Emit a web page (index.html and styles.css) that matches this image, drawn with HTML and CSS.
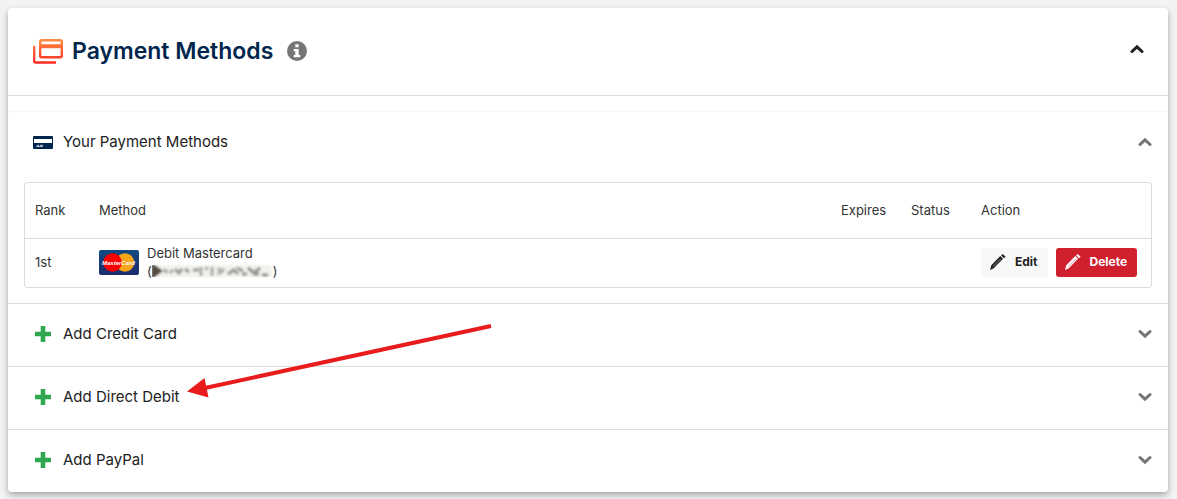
FILE: index.html
```html
<!DOCTYPE html>
<html lang="en">
<head>
  <meta charset="UTF-8">
  <meta name="viewport" content="width=device-width, initial-scale=1.0">
  <title>Payment Methods</title>
  <link rel="stylesheet" href="styles.css">
</head>
<body>

  <main class="card">
    <header class="card-header">
      <svg class="card-logo" width="30" height="26" viewBox="0 0 30 26" fill="none" aria-hidden="true">
        <defs>
          <linearGradient id="logoFill" gradientUnits="userSpaceOnUse" x1="0" y1="0" x2="0" y2="26">
            <stop offset="0" stop-color="#ff9440"/>
            <stop offset="1" stop-color="#fb2424"/>
          </linearGradient>
        </defs>
        <path d="M1.200 8v15.500q0 1 1 1H23" stroke="url(#logoFill)" stroke-width="2.300"/>
        <rect x="7.200" y="2.200" width="21.600" height="17" rx="1.500" stroke="url(#logoFill)" stroke-width="2.400"/>
        <path d="M7 8.200h22" stroke="url(#logoFill)" stroke-width="4"/>
      </svg>
      <h1 class="card-title">Payment Methods</h1>
      <button class="icon-button" type="button" aria-label="About payment methods">
        <svg width="20" height="20" viewBox="0 0 20 20" aria-hidden="true">
          <circle cx="10" cy="10" r="10" fill="#757575"/>
          <path d="M8.300 3.300h3.400v3H8.300zM6.700 8h5v6h1.600v2.300H6.700V14h1.600v-3.700H6.700z" fill="#fff"/>
        </svg>
      </button>
      <button class="icon-button card-toggle" type="button" aria-label="Collapse">
        <svg class="chevron" width="14" height="10" viewBox="0 0 14 10" aria-hidden="true"><path d="M2 7.500l5-4.700 5 4.700"/></svg>
      </button>
    </header>

    <section class="panel panel-open">
      <button class="panel-header" type="button">
        <svg class="panel-icon" width="20" height="13" viewBox="0 0 20 13" aria-hidden="true">
          <rect width="20" height="13" rx="1" fill="#00264d"/>
          <path d="M1 3h18v4H1z" fill="#fff"/>
          <path d="M4 9.300h2M7 9.300h3M3 10.500h7" stroke="#b9c3ce"/>
        </svg>
        <span>Your Payment Methods</span>
        <svg class="chevron" width="14" height="10" viewBox="0 0 14 10" aria-hidden="true"><path d="M2 7.500l5-4.700 5 4.700"/></svg>
      </button>

      <div class="table-box">
        <table class="methods">
          <thead>
            <tr>
              <th class="col-rank">Rank</th>
              <th>Method</th>
              <th class="col-small">Expires</th>
              <th class="col-small">Status</th>
              <th class="col-action">Action</th>
            </tr>
          </thead>
          <tbody>
            <tr>
              <td>1st</td>
              <td>
                <div class="method">
                  <svg width="40" height="25" viewBox="0 0 40 25" role="img" aria-label="MasterCard">
                    <defs>
                      <linearGradient id="brandFill" x1="0" y1="0" x2="0" y2="1">
                        <stop offset="0" stop-color="#104a83"/>
                        <stop offset="1" stop-color="#1d2c6c"/>
                      </linearGradient>
                    </defs>
                    <rect width="40" height="25" rx="2" fill="url(#brandFill)"/>
                    <circle cx="26" cy="12.500" r="9.300" fill="#f9a51a"/>
                    <circle cx="13.500" cy="12.500" r="9.300" fill="#f80000"/>
                    <text class="brand-text" x="19.500" y="15" text-anchor="middle">MasterCard</text>
                  </svg>
                  <div class="method-name">
                    <div>Debit Mastercard</div>
                    <!-- account number is hidden -->
                    <div class="account">(<svg width="121" height="14" viewBox="0 0 121 14" role="img" aria-label="Hidden account number">
                      <defs>
                        <filter id="soft"><feGaussianBlur stdDeviation="1.300"/></filter>
                      </defs>
                      <path d="M1 1h119v12H1z" fill="#f1f1ee" filter="url(#soft)"/>
                      <g filter="url(#soft)" fill="none" stroke-width="3">
                        <path d="M1 2l7 5-7 5zM4 5v4" stroke="#4f4a43"/>
                        <path d="M11 6l5 2M18 9l3-3" stroke="#a9a9a5"/>
                        <path d="M23 5l4 4 3-4M33 5l4 3M41 6h6" stroke="#999d98"/>
                        <path d="M49 3v9M53 4l3 1" stroke="#aab1a8"/>
                        <path d="M60 3v9M66 4l4 5M72 5l-6 5" stroke="#a9b0a6"/>
                        <path d="M76 10l6-4 4 4M85 4l6 3" stroke="#969d95"/>
                        <path d="M90 10h5M96 4l6 5 6-5M101 10h6M110 11h6" stroke="#929890"/>
                      </g>
                    </svg>)</div>
                  </div>
                </div>
              </td>
              <td></td>
              <td></td>
              <td>
                <div class="actions">
                  <button class="btn" type="button">
                    <svg width="16" height="16" viewBox="0 0 16 16" aria-hidden="true"><path d="M0 16l1.300-4.700L10.300 2l2.700 2.700-9.200 9.500zM11.100 1.500L12.700 0l2.900 2.700-1.600 1.500z" fill="currentColor"/><path d="M3.200 12.600l7.300-7.500" stroke="#f8f8f8" stroke-width=".5"/></svg>
                    Edit
                  </button>
                  <button class="btn btn-delete" type="button">
                    <svg width="16" height="16" viewBox="0 0 16 16" aria-hidden="true"><path d="M0 16l1.300-4.700L10.300 2l2.700 2.700-9.200 9.500zM11.100 1.500L12.700 0l2.900 2.700-1.600 1.500z" fill="currentColor"/><path d="M3.200 12.600l7.300-7.500" stroke="#d0202e" stroke-width=".5"/></svg>
                    Delete
                  </button>
                </div>
              </td>
            </tr>
          </tbody>
        </table>
      </div>
    </section>

    <section class="panel">
      <button class="panel-header" type="button">
        <svg class="panel-icon" width="20" height="16" viewBox="0 0 20 16" aria-hidden="true"><path d="M2 8h16M10 0v16" stroke="#2fa84f" stroke-width="4.600"/></svg>
        <span>Add Credit Card</span>
        <svg class="chevron" width="14" height="10" viewBox="0 0 14 10" aria-hidden="true"><path d="M2 2.500l5 4.700 5-4.700"/></svg>
      </button>
    </section>

    <section class="panel">
      <button class="panel-header" type="button">
        <svg class="panel-icon" width="20" height="16" viewBox="0 0 20 16" aria-hidden="true"><path d="M2 8h16M10 0v16" stroke="#2fa84f" stroke-width="4.600"/></svg>
        <span>Add Direct Debit</span>
        <svg class="chevron" width="14" height="10" viewBox="0 0 14 10" aria-hidden="true"><path d="M2 2.500l5 4.700 5-4.700"/></svg>
      </button>
      <svg class="arrow" width="306" height="76" viewBox="0 0 306 76" aria-hidden="true">
        <path d="M18 64L304 2" stroke="#e81c1c" stroke-width="4"/>
        <path d="M0 67.500L17.500 54l4 19.500z" fill="#e81c1c"/>
      </svg>
    </section>

    <section class="panel">
      <button class="panel-header" type="button">
        <svg class="panel-icon" width="20" height="16" viewBox="0 0 20 16" aria-hidden="true"><path d="M2 8h16M10 0v16" stroke="#2fa84f" stroke-width="4.600"/></svg>
        <span>Add PayPal</span>
        <svg class="chevron" width="14" height="10" viewBox="0 0 14 10" aria-hidden="true"><path d="M2 2.500l5 4.700 5-4.700"/></svg>
      </button>
    </section>
  </main>

</body>
</html>
```
FILE: styles.css
```css
* {
  box-sizing: border-box;
}

body {
  font-family: Inter, "Liberation Sans", sans-serif;
  background: #f3f3f3;
  color: #212121;
  margin: 0;
  padding: 8px 9px 7px 8px;
}

button {
  font: inherit;
  color: inherit;
  border: 0;
  background: none;
  padding: 0;
  cursor: pointer;
}

svg {
  display: block;
  flex: none;
}

.card {
  background: #fff;
  border-radius: 4px;
  box-shadow: 0 3px 6px rgba(0,0,0,0.32);
}

.card-header {
  display: flex;
  align-items: center;
  height: 88px;
  padding: 0 24px 2px 25px;
  border-bottom: 1px solid #dcdcdc;
}

.card-title {
  font-size: 23px;
  line-height: 32px;
  font-weight: 600;
  color: #00264d;
  margin: 0 14px 0 9px;
}

.card-toggle {
  margin-left: auto;
  padding-bottom: 4px;
  color: #212121;
}

.chevron {
  fill: none;
  stroke: currentColor;
  stroke-width: 3;
  stroke-linecap: round;
}

.panel {
  position: relative;
  border-top: 1px solid #dcdcdc;
}

.panel-open {
  margin-top: 15px;
  border-top-color: #f7f7f7;
  border-radius: 4px 4px 0 0;
}

.panel-header {
  display: flex;
  align-items: center;
  width: 100%;
  height: 62px;
  padding: 0 16px 2px 25px;
  font-size: 15px;
  line-height: 24px;
  text-align: left;
}

.panel-icon {
  margin-right: 10px;
}

.panel-header .chevron {
  margin-left: auto;
  color: #757575;
}

.table-box {
  margin: 8px 16px 15px;
  border: 1px solid #dcdcdc;
  border-radius: 3px;
}

.methods {
  width: 100%;
  table-layout: fixed;
  border-collapse: collapse;
  font-size: 13px;
  line-height: 18px;
  color: #333;
}

.methods th,
.methods td {
  padding: 0 10px;
  font-weight: 400;
  text-align: left;
}

.methods th {
  height: 55px;
  border-bottom: 1px solid #dcdcdc;
}

.methods td {
  height: 49px;
  padding-bottom: 1px;
}

.col-rank {
  width: 64px;
}

.col-small {
  width: 70px;
}

.col-action {
  width: 180px;
}

.method,
.actions,
.account {
  display: flex;
  align-items: center;
  gap: 8px;
}

.account {
  gap: 0;
}

.brand-text {
  font-family: "Liberation Sans", sans-serif;
  font-size: 6px;
  font-weight: 700;
  font-style: italic;
  fill: #fff;
}

.btn {
  display: flex;
  align-items: center;
  gap: 9px;
  height: 29px;
  padding: 0 10px 0 9px;
  border-radius: 3px;
  background: #f8f8f8;
  color: #212121;
  font-size: 12px;
  font-weight: 700;
}

.btn-delete {
  background: #d0202e;
  color: #fff;
}

/* arrow that points at the direct debit row */
.arrow {
  position: absolute;
  left: 179px;
  bottom: 29px;
  pointer-events: none;
}
```
